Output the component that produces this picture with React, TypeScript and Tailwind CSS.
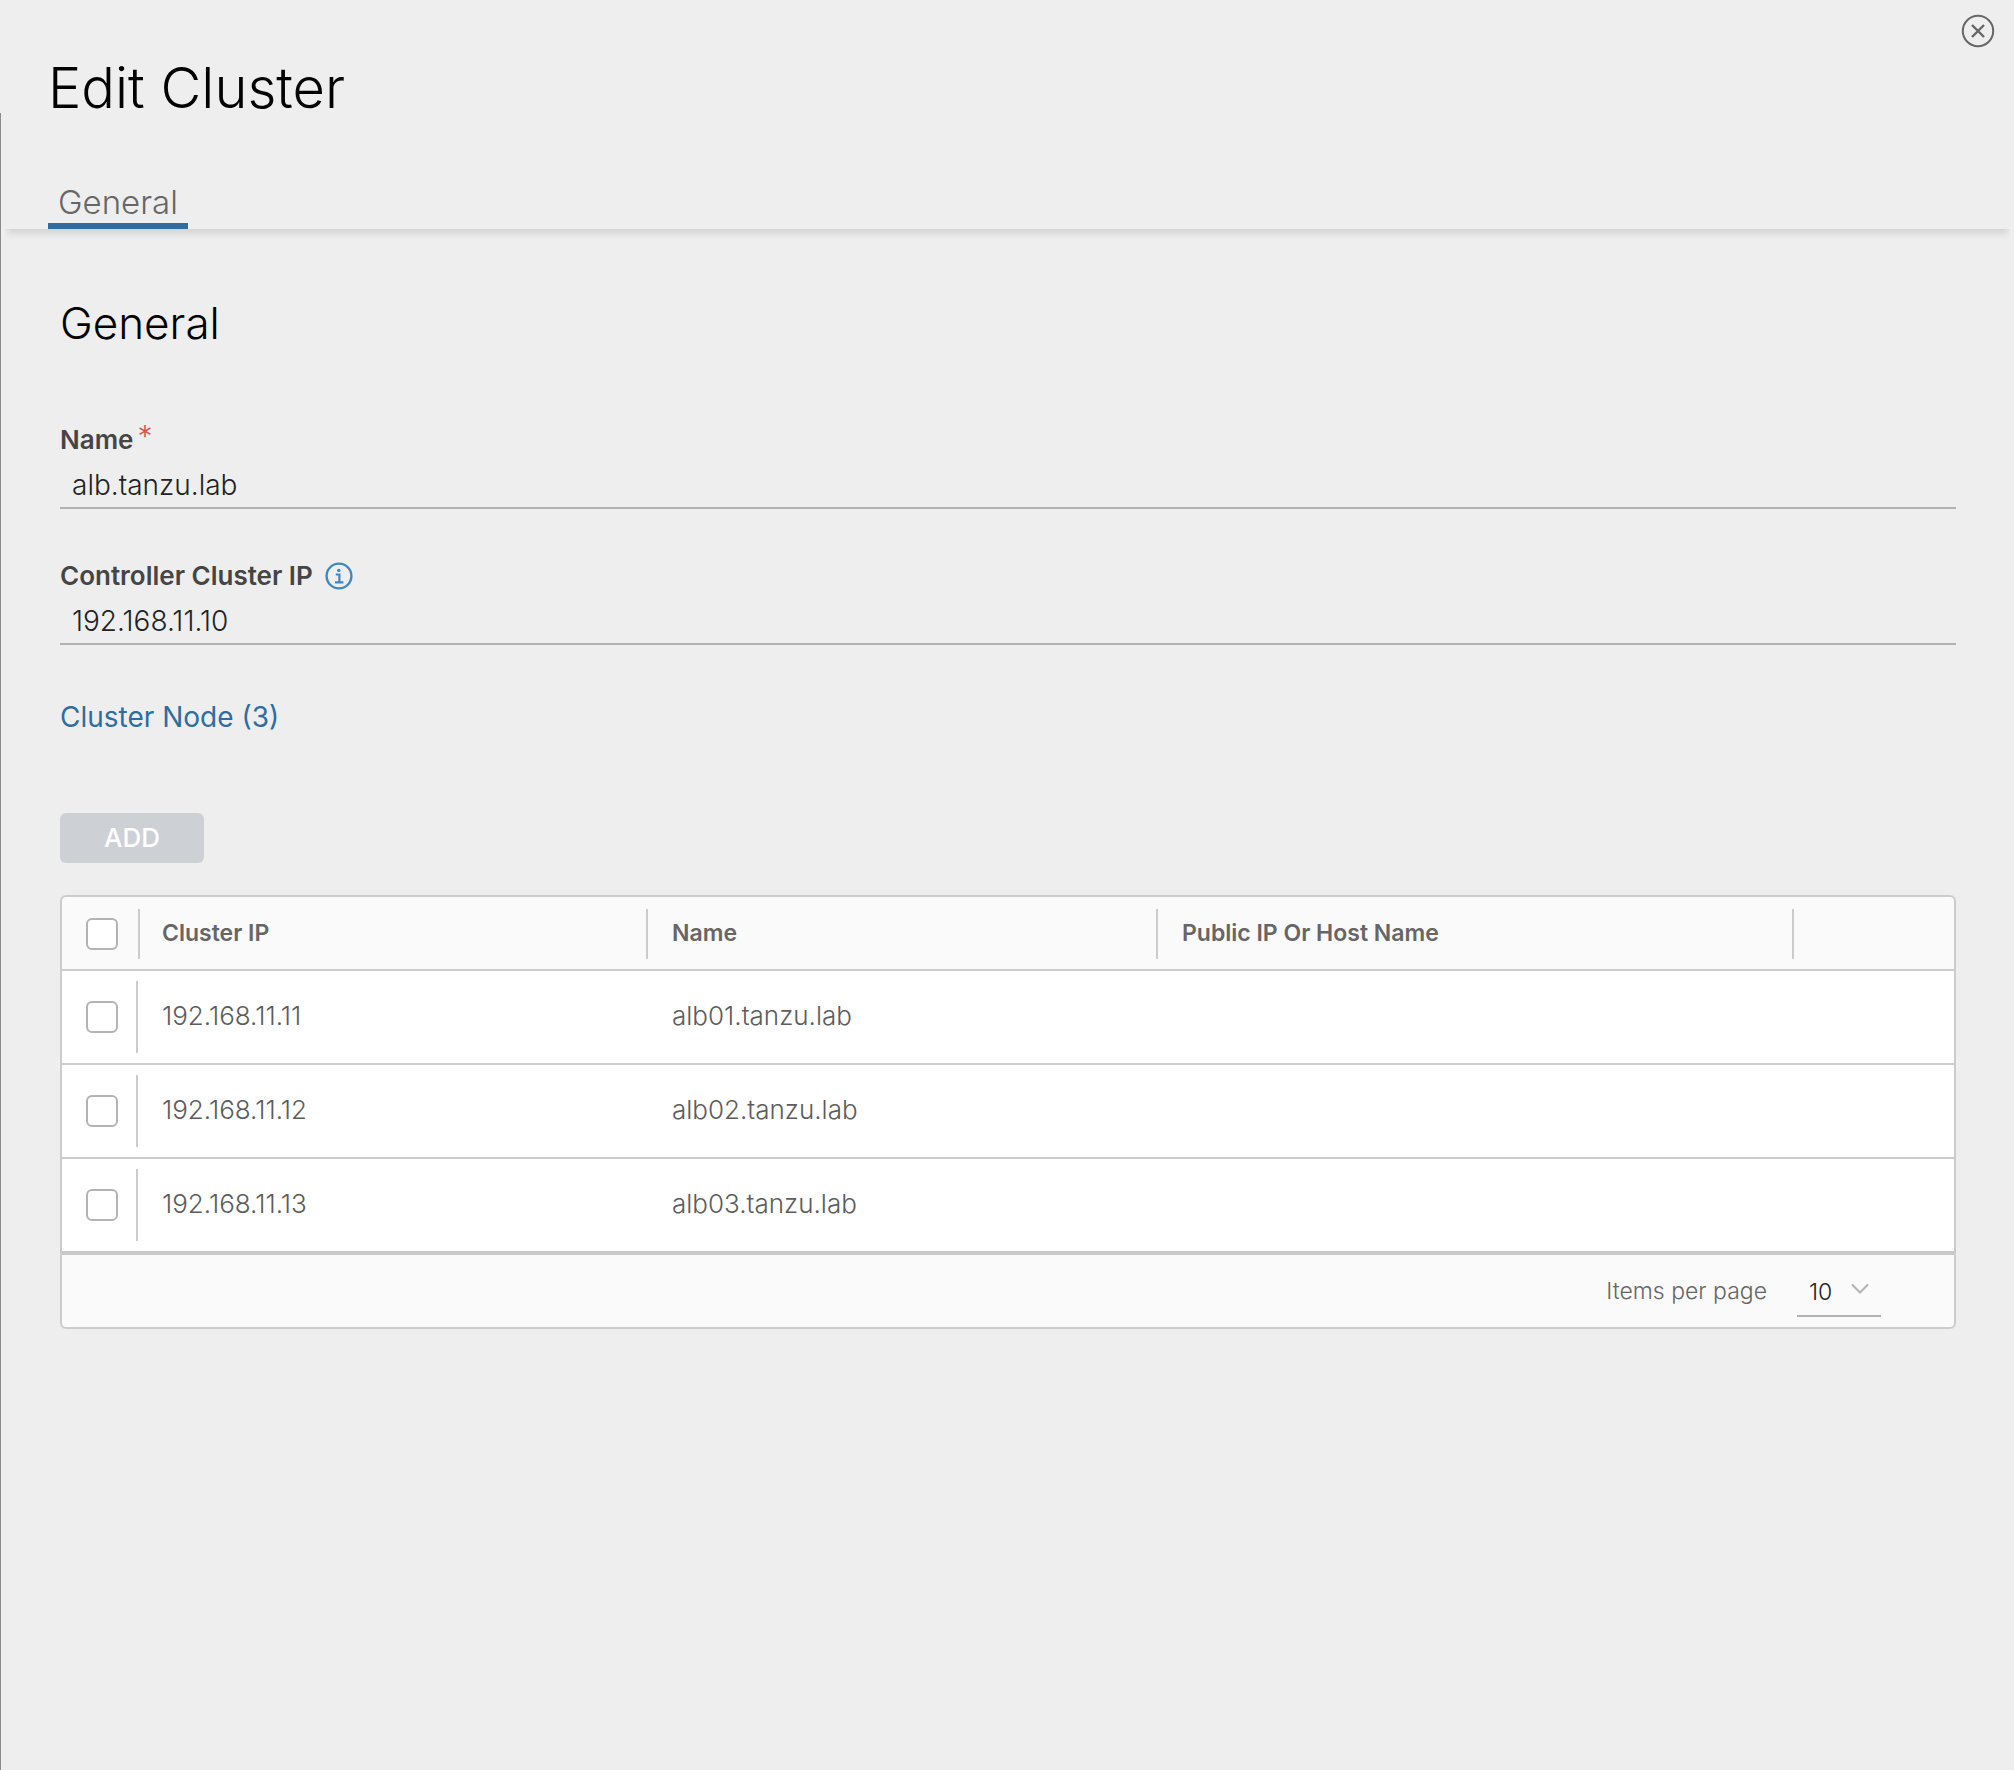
import { useState } from "react";

const nodes = [
  { ip: "192.168.11.11", name: "alb01.tanzu.lab" },
  { ip: "192.168.11.12", name: "alb02.tanzu.lab" },
  { ip: "192.168.11.13", name: "alb03.tanzu.lab" },
];

const checkboxClass =
  "block ml-6 size-8 shrink-0 appearance-none rounded-md border-2 border-[#b3b3b3] bg-white checked:bg-[#2f6da0]";

const inputClass =
  "block h-[53px] w-full border-b-2 border-[#b3b3b3] bg-transparent pb-[6px] pl-3 pt-3 text-[28px] font-light leading-8 text-[#222] outline-none";

const labelRowClass = "flex h-8 items-center text-[26px] font-semibold leading-8 text-[#454545]";

function CloseIcon() {
  return (
    <svg viewBox="0 0 34 34" className="size-[34px]" fill="none" stroke="#666" strokeWidth="2" aria-hidden="true">
      <circle cx="17" cy="17" r="15.2" />
      <path d="M11 11l12 12M23 11L11 23" strokeWidth="2.4" />
    </svg>
  );
}

function InfoIcon() {
  return (
    <svg viewBox="0 0 28 28" className="size-7" fill="none" stroke="#3f88bf" aria-hidden="true">
      <circle cx="14" cy="14" r="12.4" strokeWidth="2.4" />
      <circle cx="13.8" cy="8.4" r="1.7" fill="#3f88bf" stroke="none" />
      <path d="M10.8 12.5h3.6V20M10 20.4h8.4" strokeWidth="2.2" />
    </svg>
  );
}

export default function App() {
  const [name, setName] = useState("alb.tanzu.lab");
  const [clusterIp, setClusterIp] = useState("192.168.11.10");

  return (
    <div className="flex min-h-screen flex-col bg-[#eeeeee] font-['Inter',sans-serif] text-black">
      <header className="relative h-[113px] pl-12 pt-14">
        <h1 className="text-[56px] font-light leading-16">Edit Cluster</h1>
        <button type="button" aria-label="Close" className="absolute right-[19px] top-[14px]">
          <CloseIcon />
        </button>
      </header>

      <div className="flex flex-1 flex-col border-l border-[#8c8c8c]">
        <nav
          role="tablist"
          className="mx-1 flex h-[116px] items-end pl-[43px] shadow-[0_6px_8px_-2px_rgba(0,0,0,0.13)] [clip-path:inset(0_0_-20px_0)]"
        >
          <button
            type="button"
            role="tab"
            aria-selected="true"
            className="h-[49px] border-b-6 border-[#2f6da0] px-[10px] text-[33px] font-light leading-11 text-[#666]"
          >
            General
          </button>
        </nav>

        <main className="ml-[59px] mr-[58px] pt-[66px]">
          <h2 className="text-[44px] font-light leading-14">General</h2>

          <form onSubmit={(e) => e.preventDefault()}>
            <div className="mt-[73px]">
              <div className={labelRowClass}>
                <label htmlFor="name">Name</label>
                <span className="ml-1 self-start text-[30px] font-light leading-6 text-[#d9534f]">*</span>
              </div>
              <input id="name" value={name} onChange={(e) => setName(e.target.value)} className={inputClass} />
            </div>

            <div className="mt-[51px]">
              <div className={labelRowClass}>
                <label htmlFor="cluster-ip" className="mr-3">
                  Controller Cluster IP
                </label>
                <InfoIcon />
              </div>
              <input
                id="cluster-ip"
                value={clusterIp}
                onChange={(e) => setClusterIp(e.target.value)}
                className={inputClass}
              />
            </div>
          </form>

          <h3 className="mt-[52px] text-[28px] leading-10 text-[#2f6da0]">Cluster Node (3)</h3>

          <button
            type="button"
            disabled
            className="mt-[76px] block h-[50px] w-36 rounded-md bg-[#cdd1d5] text-[26px] font-medium leading-8 text-white"
          >
            ADD
          </button>

          <div className="mt-8 overflow-hidden rounded-md border-2 border-[#cccccc] bg-[#fafafa]">
            <table className="w-full table-fixed border-separate border-spacing-0 text-left">
              <colgroup>
                <col className="w-[78px]" />
                <col className="w-[508px]" />
                <col className="w-[510px]" />
                <col />
                <col className="w-40" />
              </colgroup>
              <thead>
                <tr className="text-[23px] leading-7 text-[#666] [&>th]:px-0 [&>th]:pb-[10px] [&>th]:pt-3 [&>th]:font-semibold [&_div]:flex [&_div]:h-[50px] [&_div]:items-center [&_div]:border-r-2 [&_div]:border-[#cccccc]">
                  <th>
                    <div>
                      <input type="checkbox" aria-label="Select all nodes" className={checkboxClass} />
                    </div>
                  </th>
                  <th scope="col">
                    <div className="pb-[2px] pl-[22px]">Cluster IP</div>
                  </th>
                  <th scope="col">
                    <div className="pb-[2px] pl-6">Name</div>
                  </th>
                  <th scope="col">
                    <div className="pb-[2px] pl-6">Public IP Or Host Name</div>
                  </th>
                  <th></th>
                </tr>
              </thead>
              <tbody>
                {nodes.map((node) => (
                  <tr
                    key={node.ip}
                    className="h-[94px] bg-white text-[26px] font-light leading-8 text-[#5c5c5c] [&>td]:border-t-2 [&>td]:border-[#cccccc]"
                  >
                    <td className="p-0">
                      <div className="flex h-[72px] w-[76px] items-center border-r-2 border-[#cccccc]">
                        <input type="checkbox" aria-label={`Select ${node.name}`} className={checkboxClass} />
                      </div>
                    </td>
                    <td className="p-0 pb-[2px] pl-[22px]">{node.ip}</td>
                    <td className="p-0 pb-[2px] pl-6">{node.name}</td>
                    <td></td>
                    <td></td>
                  </tr>
                ))}
              </tbody>
            </table>
            <div className="flex h-[76px] items-center justify-end border-t-4 border-[#c8c8c8] pr-[73px] text-[23px] font-light text-[#666]">
              <label htmlFor="page-size" className="mr-[30px] leading-8">
                Items per page
              </label>
              <div className="relative mt-1">
                <select
                  id="page-size"
                  defaultValue="10"
                  className="block h-12 w-[84px] appearance-none border-b-2 border-[#b3b3b3] bg-transparent pl-3 text-[23px] font-light leading-8 text-[#222]"
                >
                  <option>10</option>
                  <option>20</option>
                  <option>50</option>
                </select>
                <svg
                  viewBox="0 0 18 12"
                  className="pointer-events-none absolute right-3 top-[14px] h-3 w-[18px]"
                  fill="none"
                  stroke="#b3b3b3"
                  strokeWidth="2"
                  aria-hidden="true"
                >
                  <path d="M1 1.5l8 8 8-8" />
                </svg>
              </div>
            </div>
          </div>
        </main>
      </div>
    </div>
  );
}
